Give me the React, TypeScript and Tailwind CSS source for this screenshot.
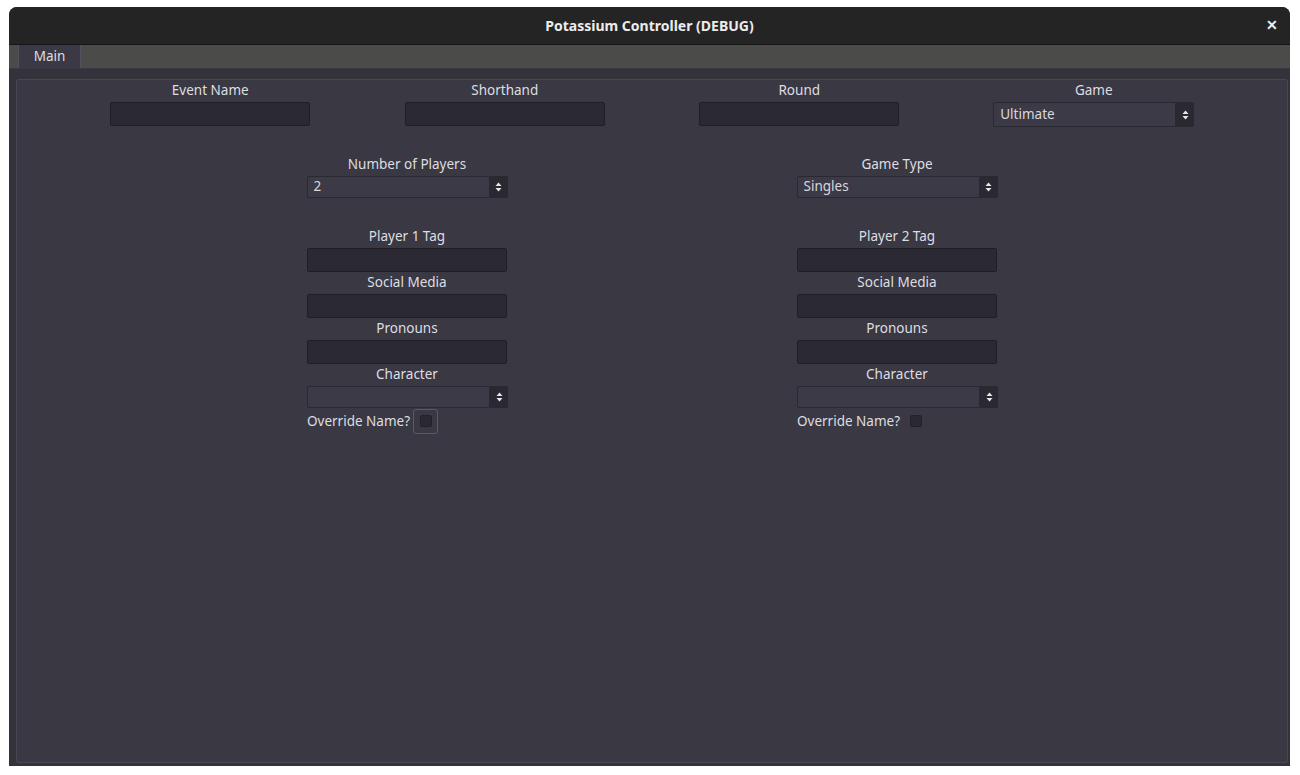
import React from 'react';

const font = { fontFamily: '"Noto Sans", "Open Sans", sans-serif' };

function Label({ text }: { text: string }) {
  return <div className="h-[22px] leading-[20px] text-center text-[13.5px] text-[#dedee2]">{text}</div>;
}

function TextInput() {
  return <div className="w-[200px] h-[24px] bg-[#2b2933] border border-[#201e25] rounded-[2px]" />;
}

function UpDown() {
  return (
    <svg width="7" height="10" viewBox="0 0 7 10">
      <path d="M3.5 0.5 L6.5 4 L0.5 4 Z" fill="#e6e6e6" />
      <path d="M0.5 6 L6.5 6 L3.5 9.5 Z" fill="#e6e6e6" />
    </svg>
  );
}

function Select({ value, tall }: { value?: string; tall?: boolean }) {
  return (
    <div className={`w-[201px] flex ${tall ? 'h-[25px]' : 'h-[22px]'}`}>
      <div className="flex-1 bg-[#3d3a47] border border-[#2a2830] rounded-l-[2px] pl-[6px] pb-[1px] flex items-center text-[13.5px] text-[#d8d8dc]">
        {value}
      </div>
      <div className="w-[18px] bg-[#2a2830] flex items-center justify-center rounded-r-[2px]">
        <UpDown />
      </div>
    </div>
  );
}

function Field({ label, children }: { label: string; children: React.ReactNode }) {
  return (
    <div className="flex flex-col items-center">
      <Label text={label} />
      {children}
    </div>
  );
}

function PlayerColumn({ n, focused }: { n: number; focused?: boolean }) {
  return (
    <div className="flex flex-col items-center">
      <div className="w-[200px]">
        <Label text={`Player ${n} Tag`} />
        <TextInput />
        <Label text="Social Media" />
        <TextInput />
        <Label text="Pronouns" />
        <TextInput />
        <Label text="Character" />
        <Select />
        <div className="flex items-center h-[26px]">
          <span className="text-[13.5px] text-[#dedee2]">Override Name?</span>
          <div
            className={`ml-[3px] w-[25px] h-[25px] rounded-[3px] flex items-center justify-center border ${
              focused ? 'border-[#41617e]' : 'border-transparent'
            }`}
          >
            <div className="w-[12px] h-[12px] rounded-[2px] bg-[#2a2830] border border-[#242229]" />
          </div>
        </div>
      </div>
    </div>
  );
}

export default function App() {
  return (
    <div className="min-h-screen bg-white pt-[7px] pl-[9px]" style={font}>
      <div className="w-[1281px] h-[759px] rounded-t-[8px] overflow-hidden flex flex-col bg-[#34323a]">
        <div className="relative h-[38px] bg-[#242424] border-b border-[#151515] flex items-center justify-center">
          <span className="text-[14px] font-bold text-[#ececec]">Potassium Controller (DEBUG)</span>
          <span className="absolute right-[12px] top-[10px] text-[14px] font-bold text-[#eeeeee] leading-[16px]">✕</span>
        </div>
        <div className="h-[24px] bg-[#4b4b49] flex items-end pl-[9px] border-b border-[#3a3840]">
          <div className="w-[63px] h-[25px] bg-[#3c3946] border border-b-0 border-[#52505b] rounded-t-[2px] flex items-center justify-center text-[13.5px] text-[#dedee2]">
            Main
          </div>
        </div>
        <div className="flex-1 flex pl-[7px] pr-[2px] pt-[10px] pb-[3px]">
          <div className="flex-1 bg-[#3a3843] border border-[#4a4755] rounded-[2px]">
            <div className="w-[1178px] mx-auto grid grid-cols-4">
              <Field label="Event Name">
                <TextInput />
              </Field>
              <Field label="Shorthand">
                <TextInput />
              </Field>
              <Field label="Round">
                <TextInput />
              </Field>
              <Field label="Game">
                <Select value="Ultimate" tall />
              </Field>
            </div>
            <div className="w-[980px] mx-auto grid grid-cols-2 mt-[27px]">
              <Field label="Number of Players">
                <Select value="2" />
              </Field>
              <Field label="Game Type">
                <Select value="Singles" />
              </Field>
            </div>
            <div className="w-[980px] mx-auto grid grid-cols-2 mt-[28px]">
              <PlayerColumn n={1} focused />
              <PlayerColumn n={2} />
            </div>
          </div>
        </div>
      </div>
    </div>
  );
}
